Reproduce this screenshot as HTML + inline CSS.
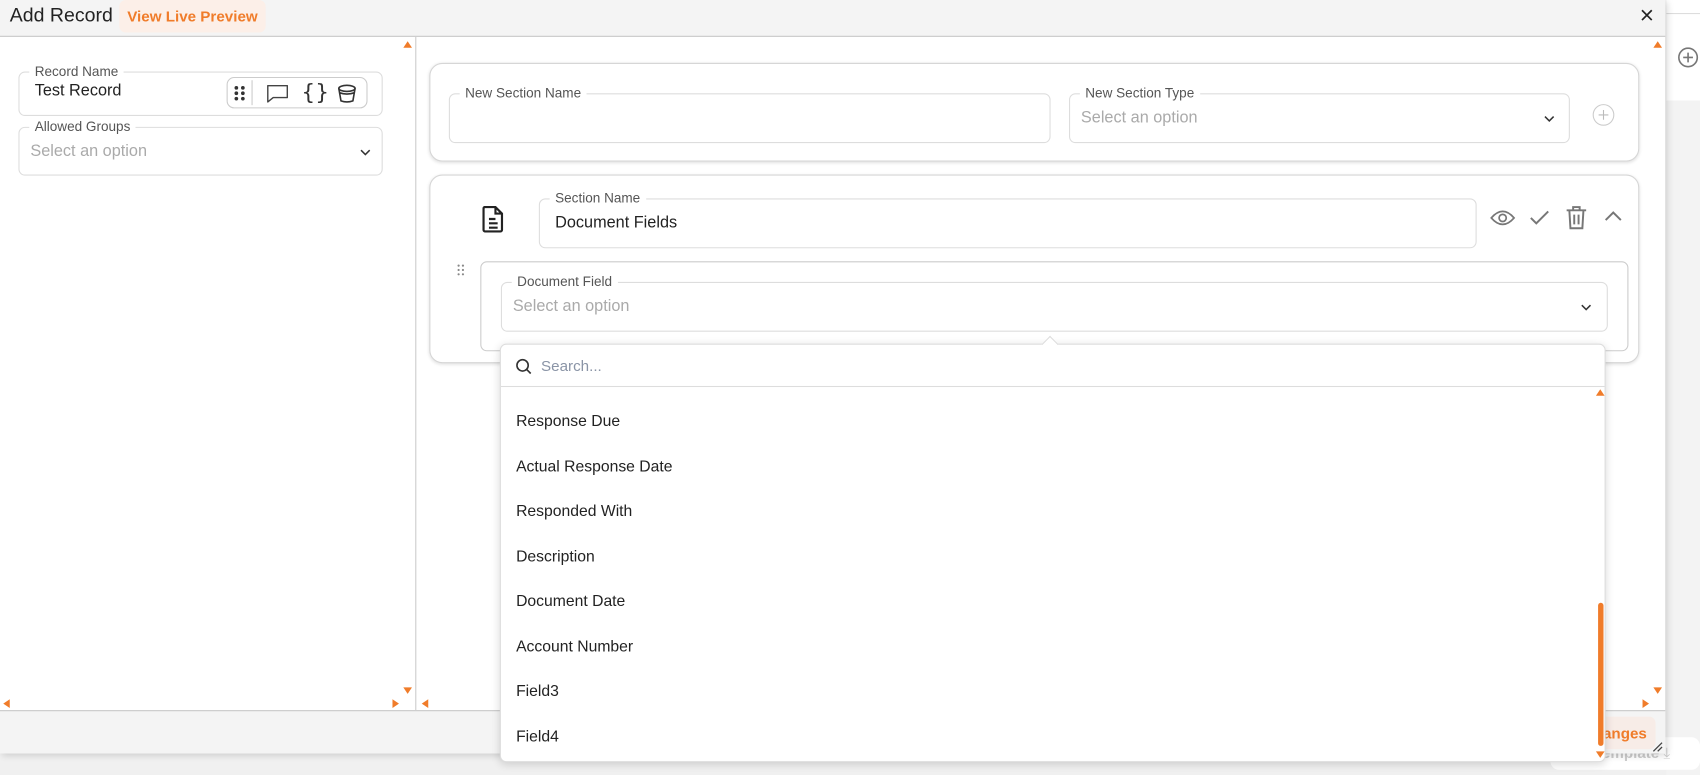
<!DOCTYPE html>
<html><head><meta charset="utf-8"><style>
*{box-sizing:border-box;margin:0;padding:0}
html,body{width:1700px;height:775px;overflow:hidden;background:#fff;font-family:"Liberation Sans",sans-serif}
#w{position:absolute;left:0;top:0;width:1568px;height:715px;transform:scale(1.08418);transform-origin:0 0;background:#f0f0f0}
.a{position:absolute}
.fs{position:absolute;border:1px solid #ddd;border-radius:6px;background:#fff}
.lg{position:absolute;top:-8px;left:9px;background:#fff;padding:0 5px;font-size:12.5px;color:#555;line-height:14px}
.ph{position:absolute;left:10px;font-size:15px;color:#aaa}
.val{position:absolute;left:14px;font-size:15px;color:#222}
.tri{position:absolute;width:0;height:0}
.up{border-left:4px solid transparent;border-right:4px solid transparent;border-bottom:6px solid #f07c2a}
.dn{border-left:4px solid transparent;border-right:4px solid transparent;border-top:6px solid #f07c2a}
.lt{border-top:4px solid transparent;border-bottom:4px solid transparent;border-right:6px solid #f07c2a}
.rt{border-top:4px solid transparent;border-bottom:4px solid transparent;border-left:6px solid #f07c2a}
.card{position:absolute;border:1px solid #d6d6d6;border-radius:12px;background:#fff;box-shadow:0 1px 3px rgba(0,0,0,.12)}
.it{position:absolute;left:14px;font-size:14.5px;color:#222}
.chev{position:absolute}
</style></head><body><div id="w">
<div class="a" style="left:1537px;top:0;width:31px;height:715px;background:#fff"></div>
<div class="a" style="left:1537px;top:12px;width:31px;height:1px;background:#ddd"></div>
<div class="a" style="left:1537px;top:93px;width:31px;height:1px;background:#ddd"></div>
<div class="a" style="left:1537px;top:93px;width:31px;height:622px;background:#f3f3f3"></div>
<svg class="a" style="left:1547px;top:43px" width="20" height="20" viewBox="0 0 20 20"><circle cx="10" cy="10" r="8.5" fill="none" stroke="#777" stroke-width="1.5"/><path d="M10 5.5v9M5.5 10h9" stroke="#777" stroke-width="1.5"/></svg>
<div class="a" style="left:1430px;top:680px;width:138px;height:30px;background:#fff;border-radius:8px;font-size:14px;color:#ccc;font-weight:bold;padding:6px 0 0 40px">Template <span style="font-weight:normal">⤓</span></div>
<div class="a" style="left:0;top:0;width:1536px;height:695px;background:#fff;box-shadow:2px 2px 6px rgba(0,0,0,.15)">
 <div class="a" style="left:0;top:0;width:1536px;height:34px;background:#f4f4f4;border-bottom:1px solid #c8c8c8"></div>
 <div class="a" style="left:9px;top:4px;font-size:18px;color:#222">Add Record</div>
 <div class="a" style="left:110px;top:0;width:135px;height:30px;background:#fcefe8;border-radius:6px;color:#f07c2a;font-weight:bold;font-size:14px;text-align:center;line-height:30px">View Live Preview</div>
 <svg class="a" style="left:1513px;top:8px" width="12" height="12"><path d="M1.5 1.5l9 9M10.5 1.5l-9 9" stroke="#222" stroke-width="1.6"/></svg>
 <div class="a" style="left:383px;top:34px;width:1px;height:621px;background:#ccc"></div>
 <div class="a" style="left:0;top:655px;width:1536px;height:40px;background:#f4f4f4;border-top:1px solid #c8c8c8"></div>
 <div class="a" style="left:1440px;top:661px;width:87px;height:30px;background:#f7ece7;border-radius:6px;color:#f07c2a;font-weight:bold;font-size:14px;line-height:30px;text-align:right;padding-right:8px">anges</div>
 <div class="tri up" style="left:372px;top:38px"></div><div class="tri dn" style="left:372px;top:634px"></div>
 <div class="tri lt" style="left:3px;top:645px"></div><div class="tri rt" style="left:362px;top:645px"></div>
 <div class="tri up" style="left:1525px;top:38px"></div><div class="tri dn" style="left:1525px;top:634px"></div>
 <div class="tri lt" style="left:389px;top:645px"></div><div class="tri rt" style="left:1515px;top:645px"></div>
 <div class="fs" style="left:17px;top:66px;width:336px;height:41px"><div class="lg">Record Name</div><div class="val" style="top:8px">Test Record</div>
  <div class="a" style="left:191px;top:4px;width:130px;height:29px;border:1px solid #ccc;border-radius:7px">
   <svg class="a" style="left:5px;top:6px" width="12" height="16"><g fill="#333"><circle cx="3" cy="3" r="1.7"/><circle cx="9" cy="3" r="1.7"/><circle cx="3" cy="8" r="1.7"/><circle cx="9" cy="8" r="1.7"/><circle cx="3" cy="13" r="1.7"/><circle cx="9" cy="13" r="1.7"/></g></svg>
   <div class="a" style="left:22px;top:2px;width:1px;height:23px;background:#ccc"></div>
   <svg class="a" style="left:35px;top:5px" width="22" height="18"><path d="M2 2h18v11H7l-5 4z" fill="none" stroke="#444" stroke-width="1.3" stroke-linejoin="round"/></svg>
   <div class="a" style="left:68px;top:1px;font-size:20px;color:#333;font-family:'DejaVu Sans'">{}</div>
   <svg class="a" style="left:100px;top:5px" width="20" height="19"><ellipse cx="10" cy="4.5" rx="7.5" ry="2.8" fill="none" stroke="#333" stroke-width="1.5"/><path d="M2.5 4.5l2 11.5q5.5 2 11 0l2-11.5M3 8.5q7 2.5 14 0" fill="none" stroke="#333" stroke-width="1.5"/></svg>
  </div></div>
 <div class="fs" style="left:17px;top:117px;width:336px;height:45px"><div class="lg">Allowed Groups</div><div class="ph" style="top:13px">Select an option</div><svg class="chev" style="left:314px;top:19px" width="10" height="7"><path d="M1 1.5l4 4 4-4" fill="none" stroke="#333" stroke-width="1.4"/></svg></div>
 <div class="card" style="left:396px;top:58px;width:1116px;height:91px">
  <div class="fs" style="left:17px;top:27px;width:555px;height:46px"><div class="lg">New Section Name</div></div>
  <div class="fs" style="left:589px;top:27px;width:462px;height:46px"><div class="lg">New Section Type</div><div class="ph" style="top:13px">Select an option</div><svg class="chev" style="left:437px;top:19px" width="10" height="7"><path d="M1 1.5l4 4 4-4" fill="none" stroke="#333" stroke-width="1.4"/></svg></div>
  <svg class="a" style="left:1071px;top:36px" width="22" height="22"><circle cx="11" cy="11" r="9.5" fill="none" stroke="#ccc"/><path d="M11 6.5v9M6.5 11h9" stroke="#bbb"/></svg>
 </div>
 <div class="card" style="left:396px;top:161px;width:1116px;height:174px">
  <svg class="a" style="left:47px;top:27px" width="22" height="26" viewBox="0 0 22 26"><path d="M3 2h10l6 6v15a1.5 1.5 0 0 1-1.5 1.5h-14A1.5 1.5 0 0 1 2 23V3.5A1.5 1.5 0 0 1 3 2zM13 2v6h6M7 13h6M7 17h8M7 21h8" fill="none" stroke="#222" stroke-width="2"/></svg>
  <div class="fs" style="left:100px;top:21px;width:865px;height:46px"><div class="lg">Section Name</div><div class="val" style="top:13px">Document Fields</div></div>
  <svg class="a" style="left:977px;top:30px" width="24" height="18"><path d="M1.5 9q10.5-12 21 0q-10.5 12-21 0z" fill="none" stroke="#777" stroke-width="1.6"/><circle cx="12" cy="9" r="3.3" fill="none" stroke="#777" stroke-width="1.6"/></svg>
  <svg class="a" style="left:1013px;top:30px" width="20" height="18"><path d="M2 9l5 5L18 3" fill="none" stroke="#777" stroke-width="1.8"/></svg>
  <svg class="a" style="left:1047px;top:27px" width="20" height="24"><path d="M1 5h18M7 5V2h6v3M3.5 5l1 16.5h11l1-16.5M8 9v9M12 9v9" fill="none" stroke="#777" stroke-width="1.8"/></svg>
  <svg class="a" style="left:1082px;top:32px" width="18" height="12"><path d="M2 9l7-7 7 7" fill="none" stroke="#777" stroke-width="1.8"/></svg>
  <svg class="a" style="left:24px;top:81px" width="8" height="12"><g fill="#888"><circle cx="2" cy="2" r="1"/><circle cx="6" cy="2" r="1"/><circle cx="2" cy="6" r="1"/><circle cx="6" cy="6" r="1"/><circle cx="2" cy="10" r="1"/><circle cx="6" cy="10" r="1"/></g></svg>
  <div class="a" style="left:46px;top:79px;width:1059px;height:83px;border:1px solid #ccc;border-radius:6px">
   <div class="fs" style="left:18px;top:18px;width:1021px;height:46px"><div class="lg">Document Field</div><div class="ph" style="top:13px">Select an option</div><svg class="chev" style="left:995px;top:19px" width="10" height="7"><path d="M1 1.5l4 4 4-4" fill="none" stroke="#333" stroke-width="1.4"/></svg></div>
  </div>
 </div>
 <div class="a" style="left:461px;top:317px;width:1020px;height:386px;background:#fff;border:1px solid #ddd;border-radius:6px;box-shadow:0 2px 8px rgba(0,0,0,.15)">
  <div class="a" style="left:501px;top:-6px;width:11px;height:11px;background:#fff;border-left:1px solid #ddd;border-top:1px solid #ddd;transform:rotate(45deg)"></div>
  <svg class="a" style="left:13px;top:12px" width="16" height="16"><circle cx="7" cy="7" r="5.2" fill="none" stroke="#333" stroke-width="1.5"/><path d="M11 11l3.5 3.5" stroke="#333" stroke-width="1.5"/></svg>
  <div class="a" style="left:37px;top:11px;font-size:14px;color:#8a94a6">Search...</div>
  <div class="a" style="left:0;top:38px;width:1018px;height:1px;background:#ddd"></div>
  <div class="it" style="top:63px">Response Due</div>
  <div class="it" style="top:105px">Actual Response Date</div>
  <div class="it" style="top:146px">Responded With</div>
  <div class="it" style="top:188px">Description</div>
  <div class="it" style="top:229px">Document Date</div>
  <div class="it" style="top:271px">Account Number</div>
  <div class="it" style="top:312px">Field3</div>
  <div class="it" style="top:354px">Field4</div>
  <div class="tri up" style="left:1010px;top:41px"></div>
  <div class="a" style="left:1012px;top:238px;width:5px;height:132px;background:#f07c2a;border-radius:3px"></div>
  <div class="tri dn" style="left:1010px;top:375px"></div>
 </div>
</div>
<svg class="a" style="left:1524px;top:684px" width="10" height="10"><path d="M1 9l8-8M5 9l4-4" stroke="#444" stroke-width="1.2"/></svg>
</div></body></html>
